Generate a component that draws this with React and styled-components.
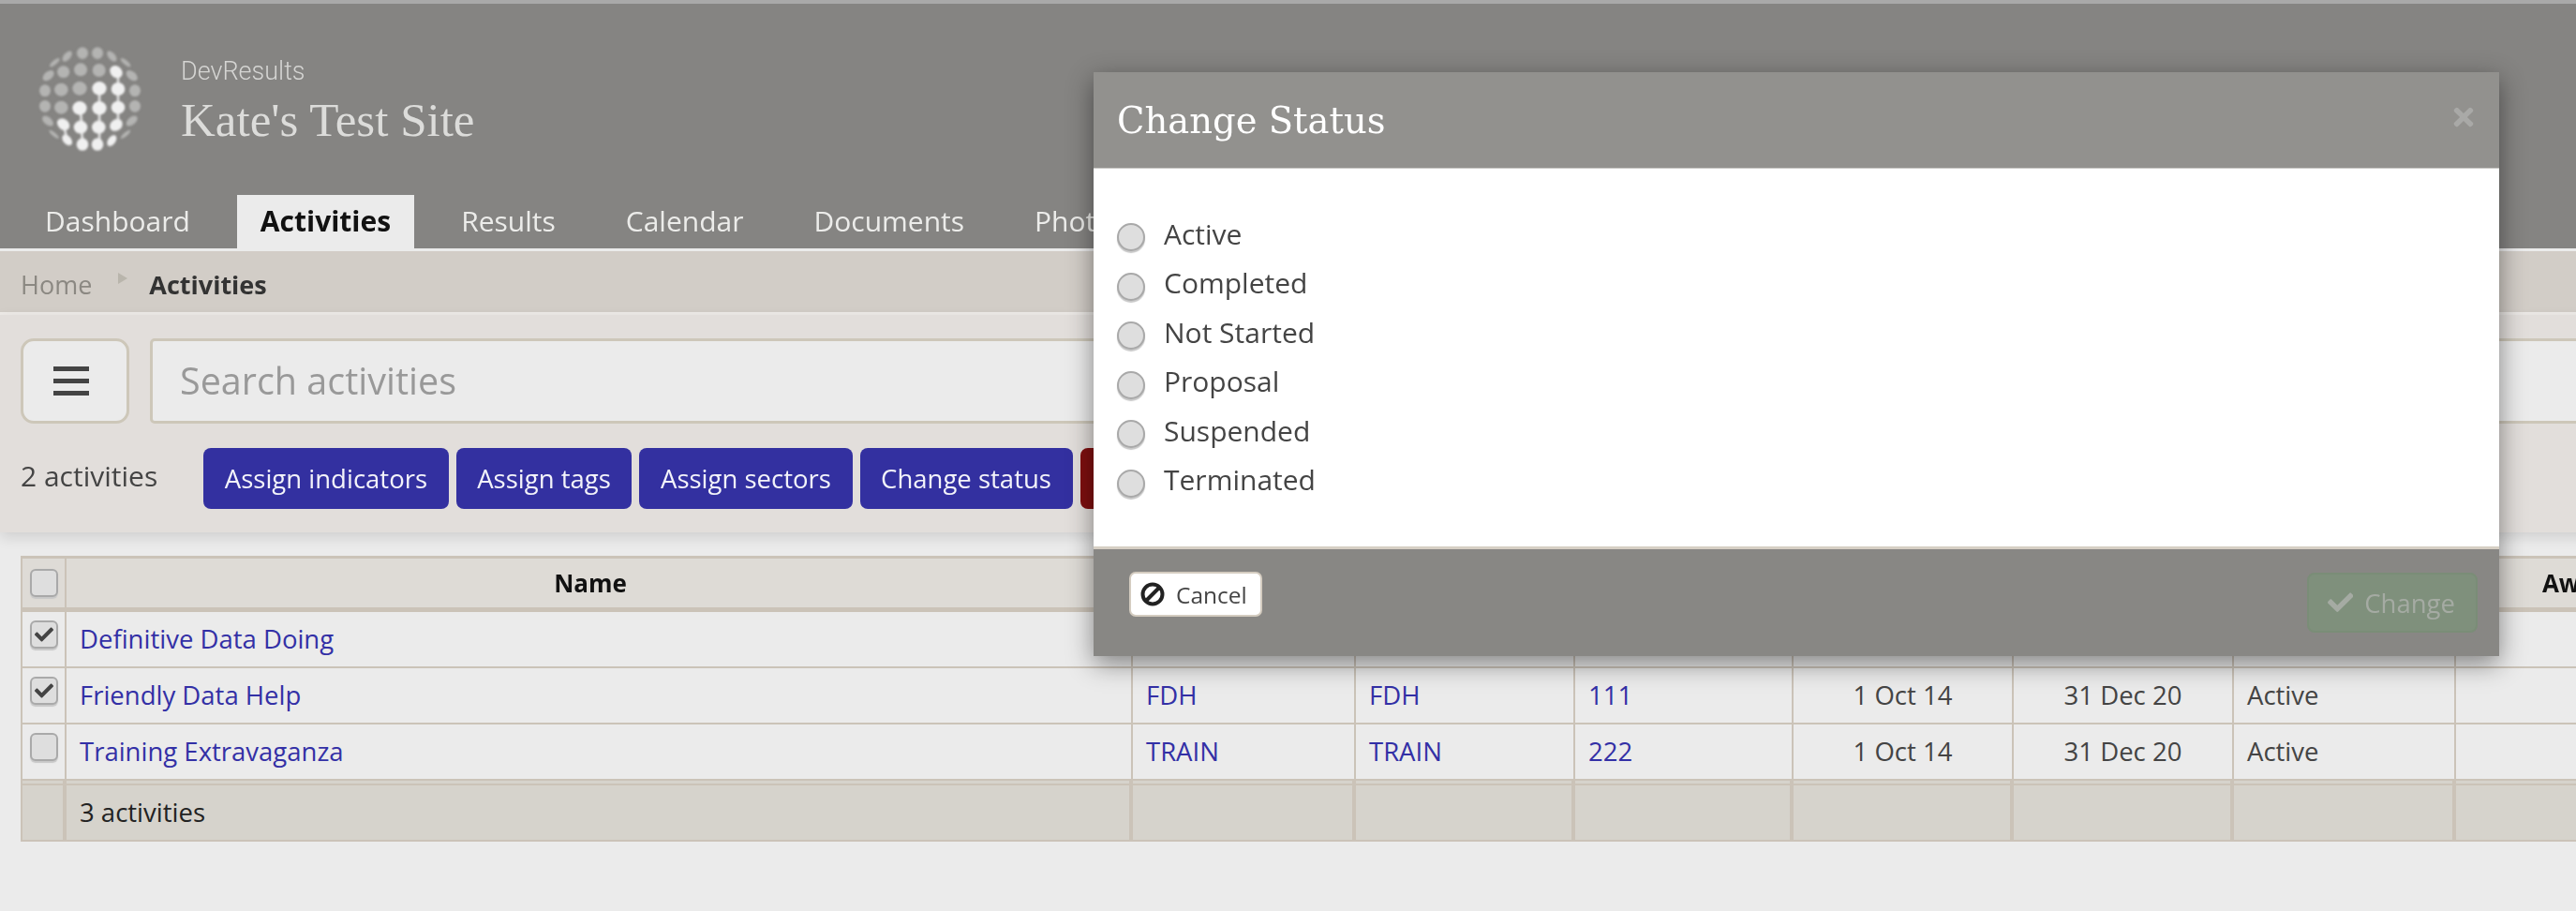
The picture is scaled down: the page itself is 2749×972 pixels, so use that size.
import React from "react"
import styled, { createGlobalStyle } from "styled-components"
import { FaCheck, FaTimes } from "react-icons/fa"

const GlobalStyle = createGlobalStyle`
  html, body {
    margin: 0;
    height: 100%;
    overflow: hidden;
    background: #ebebeb;
  }
  * { box-sizing: border-box; }
`

const Page = styled.div`
  position: relative;
  width: 3000px;
  height: 972px;
  overflow: hidden;
  font-family: "Open Sans", sans-serif;
  font-size: 27.5px;
  color: #444;
  background: #ebebeb;
`

const Header = styled.header`
  display: flex;
  flex-direction: column;
  height: 268px;
  background: #858482;
  border-top: 4px solid #a9a9a9;
  border-bottom: 3px solid #ebebeb;
`

const Brand = styled.div`
  display: flex;
  gap: 3px;
  padding: 26px 0 0 20px;
`

const BrandText = styled.div`
  display: flex;
  flex-direction: column;
  padding-top: 23px;
`

const OrgName = styled.div`
  margin-top: 5px;
  font-family: Roboto, sans-serif;
  font-weight: 300;
  font-size: 27px;
  line-height: 36px;
  color: #d5d5d3;
`

const SiteName = styled.div`
  margin-top: 4px;
  font-family: "Liberation Serif", serif;
  font-size: 51px;
  line-height: 60px;
  color: #dcdcda;
`

const Nav = styled.nav`
  display: flex;
  gap: 25px;
  margin-top: auto;
  padding-left: 23px;
`

const Tab = styled.div`
  height: 57px;
  padding: 0 25px;
  font-size: 30px;
  line-height: 55px;
  font-weight: ${(p) => (p.$active ? 700 : 400)};
  color: ${(p) => (p.$active ? "#111" : "#ececea")};
  background: ${(p) => (p.$active ? "#ebebeb" : "transparent")};
`

const Breadcrumb = styled.div`
  display: flex;
  align-items: center;
  height: 68px;
  padding: 6px 22px 0;
  background: #d2cdc7;
  border-bottom: 3px solid #eeebe8;
  font-size: 27px;
`

const Crumb = styled.span`
  color: #8b8882;
`

const CrumbArrow = styled.span`
  width: 0;
  height: 0;
  margin: -14px 23px 0 28px;
  border-left: 10px solid #b9b5ac;
  border-top: 6px solid transparent;
  border-bottom: 6px solid transparent;
`

const CrumbCurrent = styled.span`
  font-weight: 700;
  color: #333;
`

const Toolbar = styled.div`
  position: relative;
  padding: 25px 0 25px 22px;
  background: #e2dedb;
  box-shadow: 0 5px 14px rgba(0, 0, 0, 0.12);
`

const SearchRow = styled.div`
  display: flex;
  gap: 22px;
  height: 91px;
`

const MenuButton = styled.div`
  display: flex;
  flex-direction: column;
  justify-content: space-between;
  width: 116px;
  padding: 27px 40px 27px 32px;
  background: #ebebeb;
  border: 3px solid #cdc7b9;
  border-radius: 14px;
`

const MenuBar = styled.span`
  display: block;
  height: 5px;
  background: #444;
`

const SearchInput = styled.input`
  flex: 1;
  padding: 0 29px 2px;
  font-family: inherit;
  font-size: 39.5px;
  color: #444;
  background: #ebebeb;
  border: 3px solid #cdc7b9;
  border-radius: 5px;
  outline: none;

  &::placeholder {
    color: #999;
    opacity: 1;
  }
`

const ActionRow = styled.div`
  display: flex;
  align-items: center;
  gap: 8px;
  margin-top: 26px;
`

const Count = styled.span`
  margin: -6px 41px 0 0;
  font-size: 30px;
`

const ActionButton = styled.button`
  height: 65px;
  padding: 0 22.6px;
  font-family: inherit;
  font-size: 27.5px;
  color: #f3f3fa;
  background: #3330a0;
  border: 0;
  border-radius: 8px;
`

const DangerButton = styled(ActionButton)`
  width: 120px;
  background: #7f0f0f;
`

const TableWrap = styled.div`
  padding: 25px 0 0 22px;
`

const Table = styled.table`
  width: 2867px;
  table-layout: fixed;
  border-collapse: separate;
  border-spacing: 0;
  border-top: 3px solid #cbc3b8;
  border-left: 2px solid #cbc3b8;
  line-height: 36px;
`

const HeadCell = styled.th`
  height: 57px;
  padding: 0 14px;
  font-weight: 700;
  font-size: 26px;
  color: #111;
  background: #dedbd6;
  border-right: 2px solid #cbc3b8;
  border-bottom: 5px solid #cbc3b8;
`

const NameHeadCell = styled(HeadCell)`
  padding-right: 32px;
`

const Cell = styled.td`
  height: 60px;
  padding: 0 14px;
  text-align: ${(p) => (p.$center ? "center" : "left")};
  color: #444;
  border-right: 2px solid #cbc3b8;
  border-bottom: 2px solid #cbc3b8;
`

const BoxCell = styled(Cell)`
  padding: 9px 0 0 8px;
  vertical-align: top;
`

const HeadBoxCell = styled(HeadCell)`
  padding: 0 0 0 8px;
`

const FootCell = styled.td`
  height: 65px;
  padding: 5px 14px 0;
  color: #222;
  background: #d6d3cc;
  border-right: 4px solid #cbc3b8;
  border-bottom: 2px solid #cbc3b8;
  box-shadow: inset 0 3px 0 #d6d3cc, inset 0 5px 0 #cbc3b8;
`

const Link = styled.a`
  color: #3330a6;
`

const CheckBox = styled.span`
  display: flex;
  align-items: center;
  justify-content: center;
  width: 30px;
  height: 30px;
  font-size: 20px;
  color: #444;
  background: #dedede;
  border: 2px solid #a9a9a9;
  border-radius: 6px;
  box-shadow: 0 2px 1px #c8c8c8;
`

const Modal = styled.div`
  position: absolute;
  top: 77px;
  left: 1167px;
  width: 1500px;
  background: #fff;
  box-shadow: 0 8px 26px rgba(0, 0, 0, 0.45);
`

const ModalHeader = styled.div`
  display: flex;
  align-items: center;
  justify-content: space-between;
  height: 103px;
  padding: 0 23px 0 25px;
  background: #92918e;
  border-bottom: 1px solid #c8c7c4;
`

const ModalTitle = styled.h3`
  margin: 0;
  font-family: "DejaVu Serif", serif;
  font-weight: 400;
  font-size: 38.5px;
  color: #fff;
`

const CloseIcon = styled.span`
  display: flex;
  margin: -6px 0 0;
  font-size: 30px;
  color: #a9a9a7;
`

const ModalBody = styled.div`
  display: flex;
  flex-direction: column;
  height: 403px;
  padding: 43px 25px 0;
`

const RadioRow = styled.label`
  display: flex;
  align-items: center;
  gap: 20px;
  height: 52.5px;
  font-size: 30px;
  color: #444;
`

const RadioDot = styled.span`
  width: 30px;
  height: 30px;
  margin-top: 8px;
  background: #dedede;
  border: 2px solid #a9a9a9;
  border-radius: 50%;
  box-shadow: 0 2px 1px #c8c8c8;
`

const ModalFooter = styled.div`
  display: flex;
  justify-content: space-between;
  height: 117px;
  padding: 24px 23px 0 38px;
  background: #888784;
  border-top: 3px solid #d6cfc4;
`

const CancelButton = styled.button`
  display: flex;
  align-items: center;
  gap: 12px;
  height: 48px;
  padding: 0 14px 0 10px;
  font-family: inherit;
  font-size: 24.5px;
  color: #444;
  background: #fff;
  border: 2px solid #d4ccc0;
  border-radius: 7px;
`

const ChangeButton = styled.button`
  display: flex;
  align-items: center;
  gap: 12px;
  height: 64px;
  margin-top: 1px;
  padding: 0 22px 0 20px;
  font-family: inherit;
  font-size: 27.5px;
  color: #a5aba3;
  background: #7f907c;
  border: 2px solid #7a8d77;
  border-radius: 8px;
`

const BanIcon = () => (
  <svg width="26" height="26" viewBox="0 0 26 26" fill="none" stroke="#222" strokeWidth="4">
    <circle cx="13" cy="13" r="10.5" />
    <line x1="6" y1="20" x2="20" y2="6" />
  </svg>
)

// dots of the globe in the logo: x, y, rx, ry, angle, lit
const DOTS = [
  [115, 110, 20, 7, -40, 0], [155, 90, 20, 11, -50, 0], [204, 80, 18, 19, 0, 0],
  [252, 80, 18, 19, 0, 0], [298, 90, 20, 11, 50, 0], [342, 110, 20, 7, 40, 0],
  [95, 152, 21, 13, -40, 0], [143, 140, 20, 19, 0, 0], [198, 133, 21, 21, 0, 0],
  [257, 135, 21, 21, 0, 0], [312, 140, 22, 18, 45, 1], [362, 152, 21, 13, 40, 0],
  [84, 200, 18, 19, 0, 0], [136, 197, 22, 21, 0, 0], [195, 193, 23, 22, 0, 0],
  [258, 193, 23, 22, 0, 1], [318, 195, 22, 21, 0, 1], [372, 200, 18, 19, 0, 0],
  [84, 250, 18, 19, 0, 0], [136, 254, 22, 21, 0, 0], [195, 256, 23, 22, 0, 1],
  [258, 256, 23, 22, 0, 1], [318, 254, 22, 21, 0, 1], [372, 250, 18, 19, 0, 0],
  [93, 297, 21, 12, 40, 0], [143, 308, 22, 17, 40, 1], [198, 317, 22, 21, 0, 1],
  [256, 317, 22, 21, 0, 1], [312, 310, 22, 18, -40, 1], [362, 297, 21, 12, -40, 0],
  [113, 340, 20, 6, 40, 0], [155, 358, 20, 13, 50, 1], [204, 372, 19, 20, 0, 1],
  [252, 372, 19, 20, 0, 1], [298, 360, 20, 12, -55, 1], [342, 340, 20, 6, -40, 0],
]

const NECKS = [
  [258, 193, 258, 372], [318, 140, 318, 310], [198, 256, 204, 372], [143, 308, 155, 358],
]

const Logo = () => (
  <svg width="170" height="150" viewBox="0 0 510 450">
    <defs>
      <filter id="soft">
        <feGaussianBlur stdDeviation="3.5" />
      </filter>
    </defs>
    <g filter="url(#soft)">
      {NECKS.map(([x1, y1, x2, y2], i) => (
        <line key={i} x1={x1} y1={y1} x2={x2} y2={y2} stroke="#efefef" strokeWidth="7" />
      ))}
      {DOTS.map(([x, y, rx, ry, a, lit], i) => (
        <ellipse
          key={i}
          cx={x}
          cy={y}
          rx={rx}
          ry={ry}
          transform={`rotate(${a} ${x} ${y})`}
          fill={lit ? "#f0f0f0" : "#b4b4b2"}
        />
      ))}
    </g>
  </svg>
)

const TABS = ["Dashboard", "Activities", "Results", "Calendar", "Documents", "Photos"]
const STATUSES = ["Active", "Completed", "Not Started", "Proposal", "Suspended", "Terminated"]
const WIDTHS = [47, 1138, 238, 234, 233, 235, 235, 237, 270]

const ROWS = [
  { name: "Definitive Data Doing", checked: true },
  { name: "Friendly Data Help", checked: true, code: "FDH", num: "111", start: "1 Oct 14", end: "31 Dec 20", status: "Active" },
  { name: "Training Extravaganza", code: "TRAIN", num: "222", start: "1 Oct 14", end: "31 Dec 20", status: "Active" },
]

const App = () => {
  return (
    <Page>
      <GlobalStyle />
      <Header>
        <Brand>
          <Logo />
          <BrandText>
            <OrgName>DevResults</OrgName>
            <SiteName>Kate's Test Site</SiteName>
          </BrandText>
        </Brand>
        <Nav>
          {TABS.map((t) => (
            <Tab key={t} $active={t === "Activities"}>{t}</Tab>
          ))}
        </Nav>
      </Header>

      <Breadcrumb>
        <Crumb>Home</Crumb>
        <CrumbArrow />
        <CrumbCurrent>Activities</CrumbCurrent>
      </Breadcrumb>

      <Toolbar>
        <SearchRow>
          <MenuButton>
            <MenuBar />
            <MenuBar />
            <MenuBar />
          </MenuButton>
          <SearchInput placeholder="Search activities" />
        </SearchRow>
        <ActionRow>
          <Count>2 activities</Count>
          <ActionButton>Assign indicators</ActionButton>
          <ActionButton>Assign tags</ActionButton>
          <ActionButton>Assign sectors</ActionButton>
          <ActionButton>Change status</ActionButton>
          <DangerButton />
        </ActionRow>
      </Toolbar>

      <TableWrap>
        <Table>
          <colgroup>
            {WIDTHS.map((w, i) => (
              <col key={i} width={w} />
            ))}
          </colgroup>
          <thead>
            <tr>
              <HeadBoxCell><CheckBox /></HeadBoxCell>
              <NameHeadCell>Name</NameHeadCell>
              <HeadCell />
              <HeadCell />
              <HeadCell />
              <HeadCell />
              <HeadCell />
              <HeadCell />
              <HeadCell>Award</HeadCell>
            </tr>
          </thead>
          <tbody>
            {ROWS.map((r) => (
              <tr key={r.name}>
                <BoxCell>
                  <CheckBox>{r.checked && <FaCheck />}</CheckBox>
                </BoxCell>
                <Cell><Link>{r.name}</Link></Cell>
                <Cell><Link>{r.code}</Link></Cell>
                <Cell><Link>{r.code}</Link></Cell>
                <Cell><Link>{r.num}</Link></Cell>
                <Cell $center>{r.start}</Cell>
                <Cell $center>{r.end}</Cell>
                <Cell>{r.status}</Cell>
                <Cell />
              </tr>
            ))}
          </tbody>
          <tfoot>
            <tr>
              <FootCell />
              <FootCell>3 activities</FootCell>
              <FootCell />
              <FootCell />
              <FootCell />
              <FootCell />
              <FootCell />
              <FootCell />
              <FootCell />
            </tr>
          </tfoot>
        </Table>
      </TableWrap>

      <Modal>
        <ModalHeader>
          <ModalTitle>Change Status</ModalTitle>
          <CloseIcon><FaTimes /></CloseIcon>
        </ModalHeader>
        <ModalBody>
          {STATUSES.map((s) => (
            <RadioRow key={s}>
              <RadioDot />
              {s}
            </RadioRow>
          ))}
        </ModalBody>
        <ModalFooter>
          <CancelButton>
            <BanIcon />
            Cancel
          </CancelButton>
          <ChangeButton>
            <FaCheck />
            Change
          </ChangeButton>
        </ModalFooter>
      </Modal>
    </Page>
  )
}

export default App
